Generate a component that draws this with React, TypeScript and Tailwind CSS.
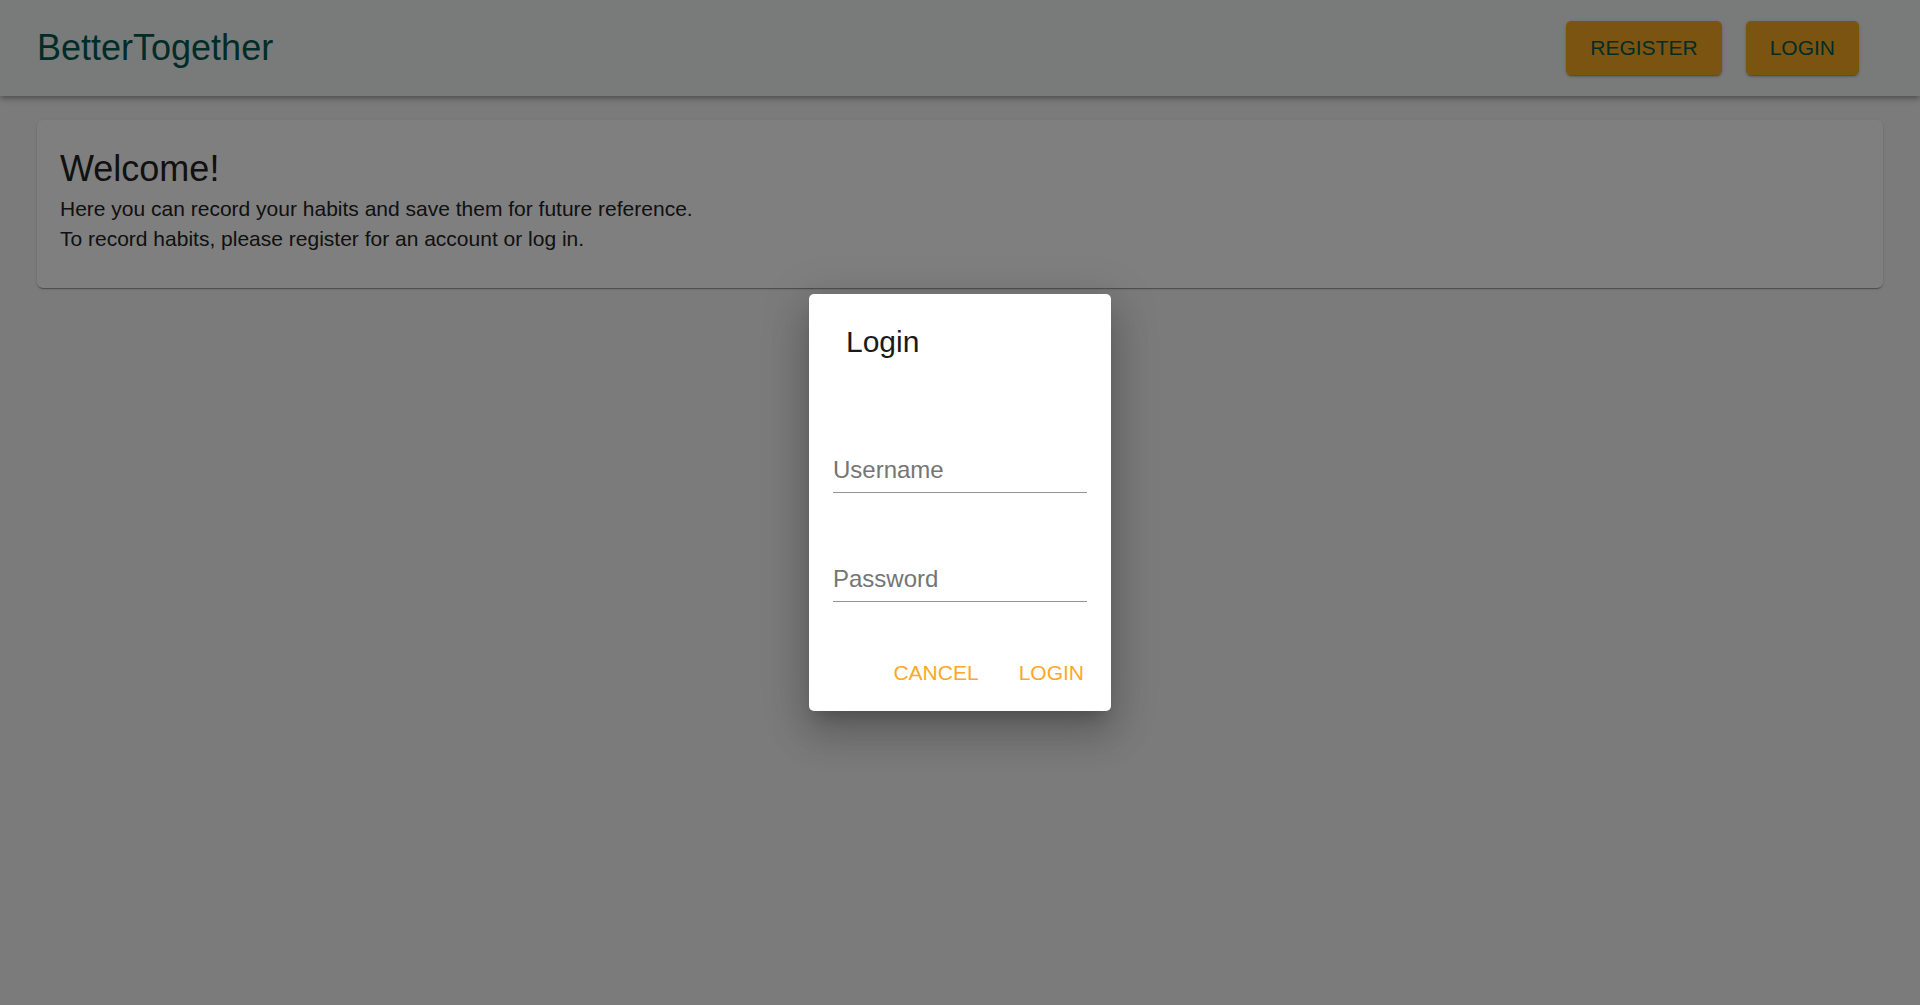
import React from "react";

export default function App() {
  return (
    <div className="relative min-h-[1005px] w-full bg-[#f6f6f6] font-['Liberation_Sans',Arial,sans-serif]">
      <header className="flex h-[96px] items-center justify-between bg-[#f3f6f4] pl-[37px] pr-[61px] shadow-[0_2px_4px_-1px_rgba(0,0,0,0.2),0_4px_5px_0_rgba(0,0,0,0.14),0_1px_10px_0_rgba(0,0,0,0.12)]">
        <div className="text-[36px] leading-[40px] text-[#005a50]">BetterTogether</div>
        <div className="flex items-center gap-[24px]">
          <button className="h-[54px] rounded-[5px] bg-[#f9a825] px-[24px] text-[21px] text-[#005a50] shadow-[0_3px_1px_-2px_rgba(0,0,0,0.2),0_2px_2px_0_rgba(0,0,0,0.14),0_1px_5px_0_rgba(0,0,0,0.12)]">
            REGISTER
          </button>
          <button className="h-[54px] rounded-[5px] bg-[#f9a825] px-[24px] text-[21px] text-[#005a50] shadow-[0_3px_1px_-2px_rgba(0,0,0,0.2),0_2px_2px_0_rgba(0,0,0,0.14),0_1px_5px_0_rgba(0,0,0,0.12)]">
            LOGIN
          </button>
        </div>
      </header>

      <main className="px-[37px] pt-[24px]">
        <section className="rounded-[6px] bg-white px-[23px] pb-[34px] pt-[27px] text-[#222222] shadow-[0_2px_1px_-1px_rgba(0,0,0,0.2),0_1px_1px_0_rgba(0,0,0,0.14),0_1px_3px_0_rgba(0,0,0,0.12)]">
          <h1 className="text-[36px] leading-[43px]">Welcome!</h1>
          <p className="mt-[4px] text-[21px] leading-[30px]">
            Here you can record your habits and save them for future reference.
          </p>
          <p className="text-[21px] leading-[30px]">
            To record habits, please register for an account or log in.
          </p>
        </section>
      </main>

      <div className="absolute inset-0 flex items-center justify-center bg-black/50">
        <div className="w-[302px] rounded-[5px] bg-white shadow-[0_11px_15px_-7px_rgba(0,0,0,0.2),0_24px_38px_3px_rgba(0,0,0,0.14),0_9px_46px_8px_rgba(0,0,0,0.12)]">
          <h2 className="pl-[37px] pt-[30px] text-[30px] leading-[36px] text-[#1a1a1a]">Login</h2>
          <div className="px-[24px]">
            <div className="mt-[96px] border-b border-[#949494] pb-[8px] text-[24px] leading-[28px] text-[#757575]">
              Username
            </div>
            <div className="mt-[72px] border-b border-[#949494] pb-[8px] text-[24px] leading-[28px] text-[#757575]">
              Password
            </div>
          </div>
          <div className="mt-[59px] flex justify-end gap-[40px] pb-[26px] pr-[27px]">
            <button className="text-[21px] leading-[24px] text-[#ffa726]">CANCEL</button>
            <button className="text-[21px] leading-[24px] text-[#ffa726]">LOGIN</button>
          </div>
        </div>
      </div>
    </div>
  );
}
